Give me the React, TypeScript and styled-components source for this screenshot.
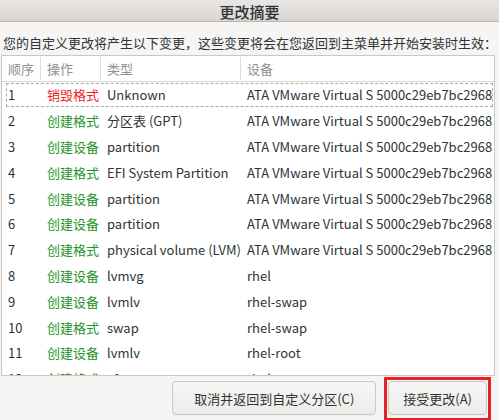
import React from 'react';
import { styled, createGlobalStyle } from 'styled-components';

const GlobalStyle = createGlobalStyle`
    html, body {
        margin: 0;
        padding: 0;
        background: #f6f5f4;
    }
    body {
        font-family: "Noto Sans CJK SC", "Noto Sans", sans-serif;
        color: #2e3436;
    }
`;

type Action = 'destroy' | 'create';

interface Change {
    id: number;
    action: string;
    kind: Action;
    type: string;
    device: string;
}

const DISK = 'ATA VMware Virtual S 5000c29eb7bc2968';

const changes: Change[] = [
    { id: 1, action: '销毁格式', kind: 'destroy', type: 'Unknown', device: DISK },
    { id: 2, action: '创建格式', kind: 'create', type: '分区表 (GPT)', device: DISK },
    { id: 3, action: '创建设备', kind: 'create', type: 'partition', device: DISK },
    { id: 4, action: '创建格式', kind: 'create', type: 'EFI System Partition', device: DISK },
    { id: 5, action: '创建设备', kind: 'create', type: 'partition', device: DISK },
    { id: 6, action: '创建设备', kind: 'create', type: 'partition', device: DISK },
    { id: 7, action: '创建格式', kind: 'create', type: 'physical volume (LVM)', device: DISK },
    { id: 8, action: '创建设备', kind: 'create', type: 'lvmvg', device: 'rhel' },
    { id: 9, action: '创建设备', kind: 'create', type: 'lvmlv', device: 'rhel-swap' },
    { id: 10, action: '创建格式', kind: 'create', type: 'swap', device: 'rhel-swap' },
    { id: 11, action: '创建设备', kind: 'create', type: 'lvmlv', device: 'rhel-root' },
    { id: 12, action: '创建格式', kind: 'create', type: 'xfs', device: 'rhel-root' },
];

const App: React.FC = () => {
    return (
        <>
            <GlobalStyle />
            <Window>
                <TitleBar>更改摘要</TitleBar>
                <Content>
                    <Intro>您的自定义更改将产生以下变更，这些变更将会在您返回到主菜单并开始安装时生效：</Intro>
                    <TableFrame>
                        <HeaderRow>
                            <HeaderCell>顺序</HeaderCell>
                            <HeaderCell>操作</HeaderCell>
                            <HeaderCell>类型</HeaderCell>
                            <HeaderCell $last>设备</HeaderCell>
                        </HeaderRow>
                        <Rows>
                            {changes.map((c, i) => (
                                <Row key={c.id} $focused={i === 0}>
                                    <Cell>{c.id}</Cell>
                                    <ActionCell $kind={c.kind}>{c.action}</ActionCell>
                                    <Cell>{c.type}</Cell>
                                    <Cell>{c.device}</Cell>
                                </Row>
                            ))}
                        </Rows>
                    </TableFrame>
                </Content>
                <ButtonBar>
                    <Button>取消并返回到自定义分区(C)</Button>
                    <Highlighted>
                        <Button $narrow>接受更改(A)</Button>
                    </Highlighted>
                </ButtonBar>
            </Window>
        </>
    );
};

const Window = styled.div`
    width: 499px;
    height: 420px;
    display: flex;
    flex-direction: column;
    overflow: hidden;
    background: #f6f5f4;
`;

const TitleBar = styled.header`
    height: 22px;
    flex-shrink: 0;
    display: flex;
    align-items: center;
    justify-content: center;
    background: linear-gradient(to bottom, #e9e7e5, #d9d5d1);
    border-bottom: 1px solid #bcb6b0;
    font-size: 15px;
    font-weight: 500;
    color: #2e3436;
    box-sizing: border-box;
    padding-top: 1px;
`;

const Content = styled.main`
    display: flex;
    flex-direction: column;
    padding: 0 4px 0 1px;
`;

const Intro = styled.p`
    margin: 12px 0 3px 2px;
    font-size: 13px;
    line-height: 18px;
    white-space: nowrap;
    color: #2e3436;
`;

const TableFrame = styled.section`
    height: 321px;
    border: 1px solid #cdc7c2;
    background: #ffffff;
    display: flex;
    flex-direction: column;
    overflow: hidden;
    box-sizing: border-box;
`;

const columns = '39px 60px 140px 1fr';

const HeaderRow = styled.div`
    display: grid;
    grid-template-columns: ${columns};
    height: 25px;
    flex-shrink: 0;
    border-bottom: 1px solid #d8d4d0;
`;

const HeaderCell = styled.div<{ $last?: boolean }>`
    display: flex;
    align-items: center;
    padding-left: 6px;
    font-size: 13px;
    color: #8f9192;
    border-right: ${({ $last }) => ($last ? 'none' : '1px solid #dedad6')};
    margin: 1px 0;
`;

const Rows = styled.div`
    display: flex;
    flex-direction: column;
`;

const Row = styled.div<{ $focused?: boolean }>`
    display: grid;
    grid-template-columns: ${columns};
    height: 25.8px;
    flex-shrink: 0;
    align-items: center;
    box-sizing: border-box;
    margin: 0 0 0 3px;
    outline: ${({ $focused }) => ($focused ? '1px dashed #a9a9a9' : 'none')};
    outline-offset: -2px;
    font-size: 13px;
    white-space: nowrap;
`;

const Cell = styled.div`
    padding-left: 3px;
    color: #2e3436;
    overflow: visible;
`;

const ActionCell = styled(Cell)<{ $kind: Action }>`
    color: ${({ $kind }) => ($kind === 'destroy' ? '#ee1c1c' : '#25932a')};
`;

const ButtonBar = styled.footer`
    display: flex;
    justify-content: flex-end;
    align-items: center;
    gap: 12px;
    padding: 2px 12px 0 0;
    height: 40px;
`;

const Button = styled.button<{ $narrow?: boolean }>`
    height: 34px;
    padding: 0 ${({ $narrow }) => ($narrow ? '14px' : '21px')};
    font-family: "Noto Sans CJK SC", "Noto Sans", sans-serif;
    font-size: 13px;
    color: #2e3436;
    border: 1px solid #cdc7c2;
    border-radius: 4px;
    background: linear-gradient(to bottom, #f7f6f5, #edebe9);
    box-shadow: 0 1px 0 rgba(0, 0, 0, 0.04);
    cursor: pointer;
`;

const Highlighted = styled.div`
    position: relative;
    display: flex;

    &::after {
        content: '';
        position: absolute;
        left: -4px;
        right: -4px;
        top: -4px;
        bottom: -6px;
        border: 3px solid #e8202a;
        pointer-events: none;
    }
`;

export default App;
